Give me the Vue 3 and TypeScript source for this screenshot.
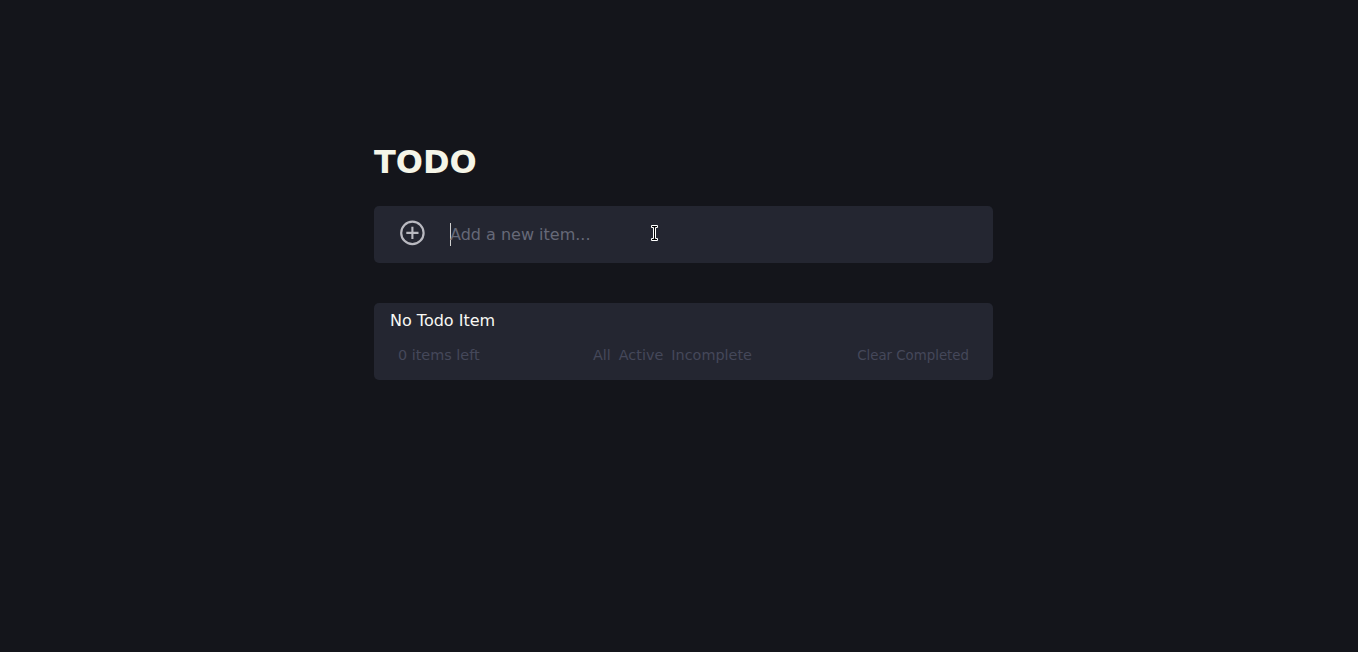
<script setup lang="ts">
import { ref } from 'vue'

const draft = ref('')
const filters: string[] = ['All', 'Active', 'Incomplete']
</script>

<template>
  <main class="page">
    <div class="todo">
      <h1>TODO</h1>
      <form class="card entry" @submit.prevent>
        <button class="add" aria-label="Add item">
          <svg viewBox="0 0 26 26" width="26" height="26" fill="none" stroke="currentColor">
            <circle cx="13.4" cy="12.9" r="11.2" stroke-width="2.2" />
            <path d="M13.400 6.800v12.200M7.300 12.900h12.200" stroke-width="2.100" />
          </svg>
        </button>
        <span class="caret"></span>
        <input v-model="draft" placeholder="Add a new item..." />
      </form>
      <section class="card list">
        <p class="empty">No Todo Item</p>
        <footer>
          <span>0 items left</span>
          <nav><span v-for="f in filters" :key="f">{{ f }}</span></nav>
          <span class="clear">Clear Completed</span>
        </footer>
      </section>
    </div>
    <svg class="pointer" viewBox="0 0 9 18" width="9" height="18">
      <path d="M1.500 1.500h6v2H5.500v11h2v2h-6v-2h2v-11h-2z" fill="#000" stroke="#fff" />
    </svg>
  </main>
</template>

<style>
body { background: #14151b; }
</style>

<style scoped>
.page {
  min-height: 652px;
  box-sizing: border-box;
  padding: 142px 0 0 374px;
  font-family: "DejaVu Sans", sans-serif;
  background: #14151b;
  color: #f8f8f4;
}
.todo { width: 619px; }
h1 { margin: 0 0 24px; font-size: 32px; line-height: 40px; font-weight: 700; color: #f5f5e8; }
.card { background: #242631; border-radius: 5px; }
.entry { display: flex; align-items: center; height: 57px; margin-bottom: 40px; }
.add { display: flex; margin: -4px 25px 0 25px; padding: 0; border: 0; background: none; color: #b9b9c0; }
.caret { width: 1px; height: 23px; margin-right: -1px; background: #d0d0d0; }
input { flex: 1; padding: 0; border: 0; outline: 0; background: none; color: #fff; font: 16px "DejaVu Sans", sans-serif; }
input::placeholder { color: #666978; opacity: 1; }
.list { height: 77px; }
.empty { margin: 0; padding: 6px 16px 0; font-size: 16px; line-height: 24px; }
footer { display: flex; justify-content: space-between; padding: 12px 24px 0; font-size: 14.4px; line-height: 20px; color: #45485a; }
nav { display: flex; }
nav span { margin-left: 8px; }
.clear { font-size: 13.333px; line-height: 22px; }
.pointer { position: absolute; left: 650px; top: 224px; }
</style>
